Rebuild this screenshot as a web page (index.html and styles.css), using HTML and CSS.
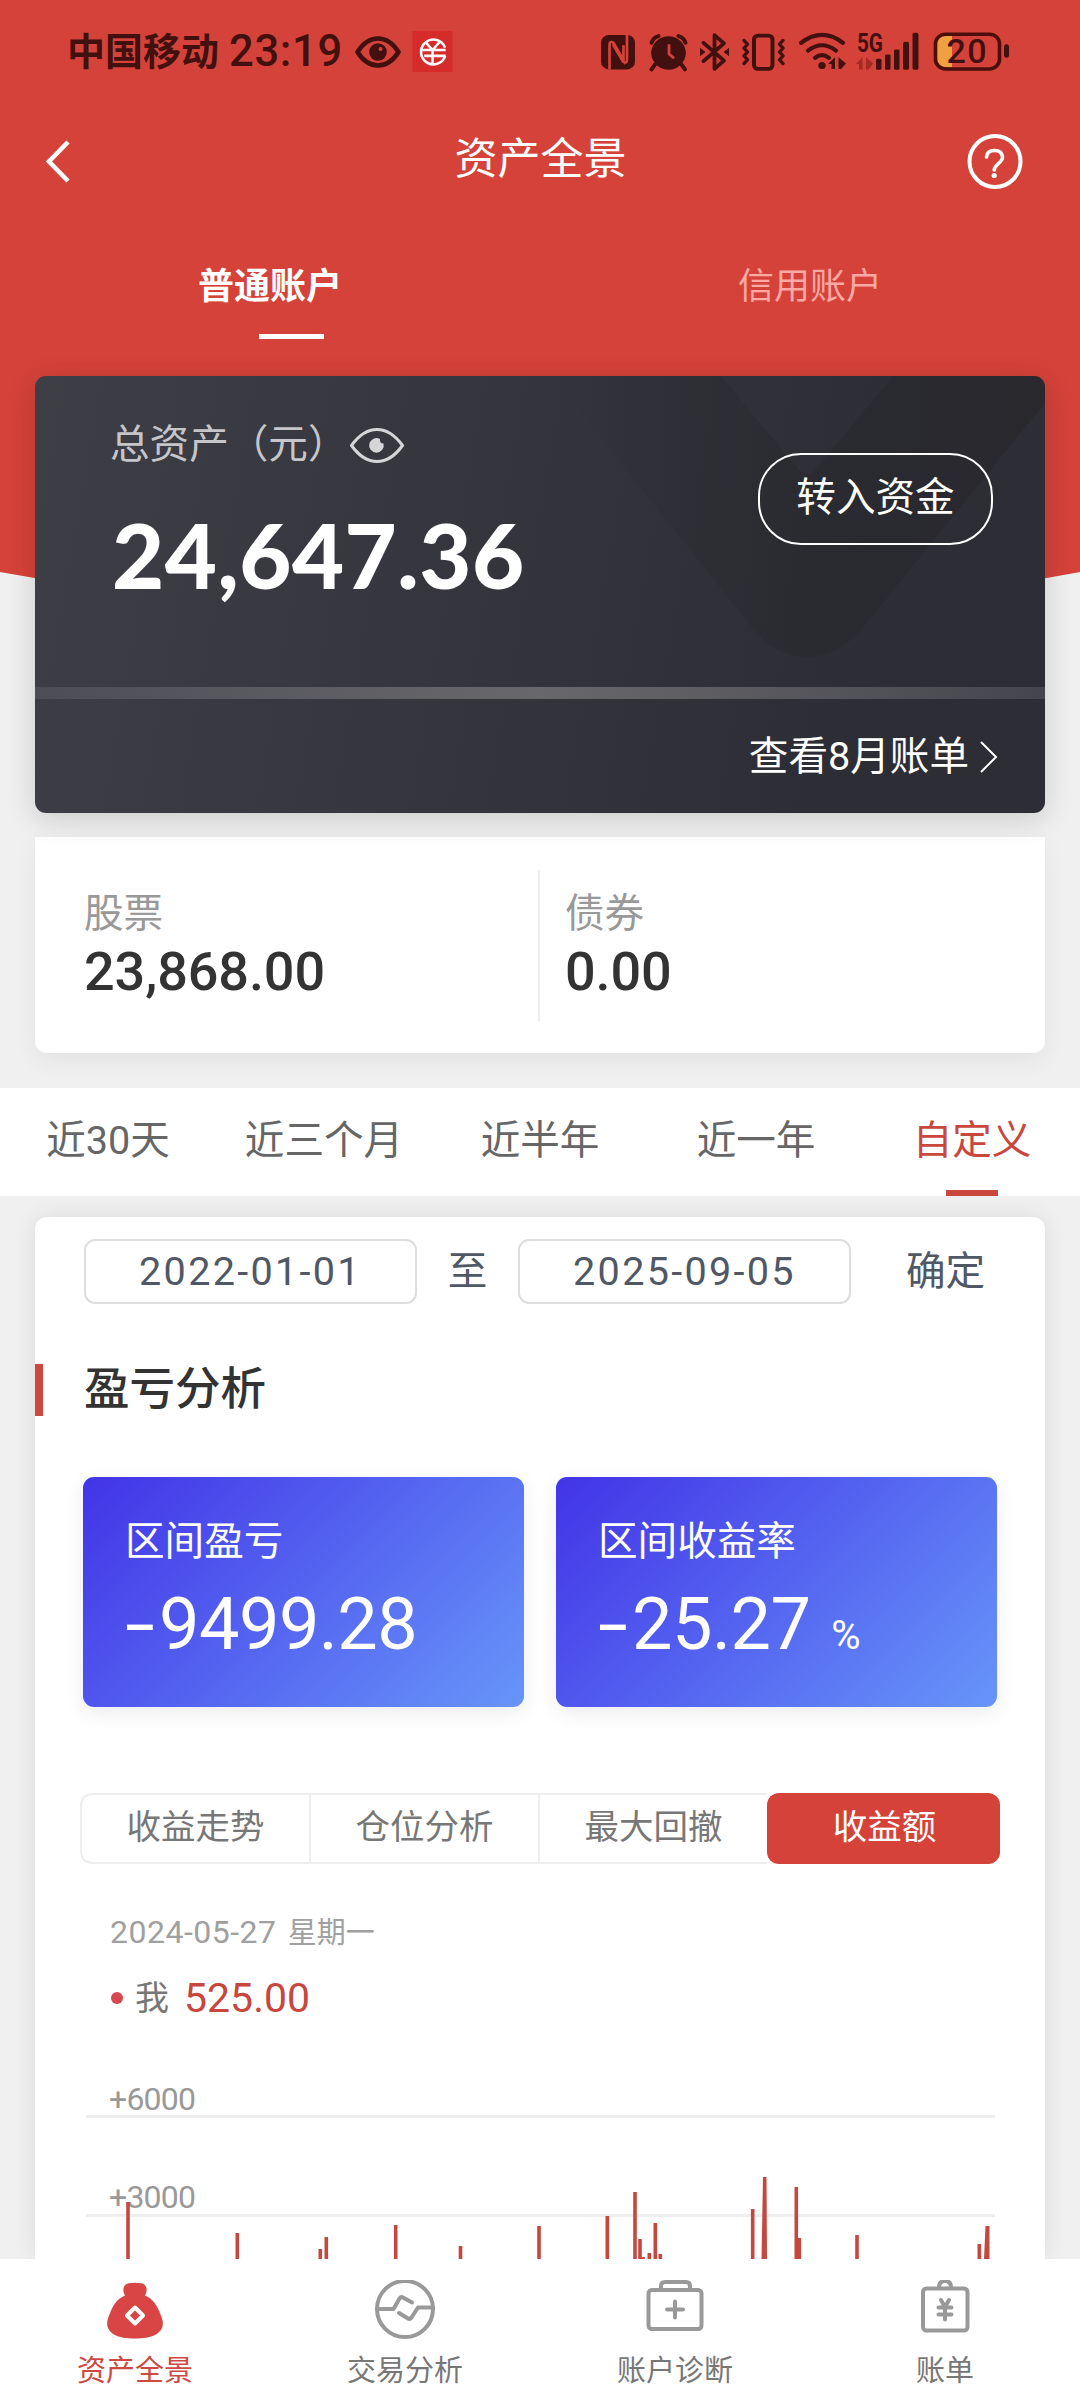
FILE: index.html
```html
<!DOCTYPE html>
<html lang="zh-CN">
  <head>
    <meta charset="UTF-8" />
    <meta name="viewport" content="width=device-width, initial-scale=1" />
    <title>资产全景</title>
    <link rel="stylesheet" href="styles.css">
  </head>
  <body>
    <svg class="hero-bg" width="1080" height="660" viewBox="0 0 1080 660">
      <path d="M0 0H1080V572Q540 672 0 572Z" fill="#d54239" />
    </svg>

    <div class="status">
      <span class="carrier">中国移动</span>
      <span class="time">23:19</span>
      <svg class="status-eye" width="46" height="32" viewBox="0 0 46 32">
        <path d="M2.500 16Q11 2.500 23 2.500T43.500 16Q35 29.500 23 29.500T2.500 16Z" fill="none" stroke="#42100e" stroke-width="4.600" stroke-linejoin="round" />
        <circle cx="23" cy="16" r="8.800" fill="#42100e" />
        <circle cx="25.500" cy="13" r="2" fill="#d54239" />
      </svg>
      <svg class="badge" width="41" height="41" viewBox="0 0 41 42">
        <rect width="41" height="42" fill="#d52b2b" />
        <g fill="none" stroke="#fff" stroke-width="2.600">
          <path d="M33.500 25.500A12.700 12.700 0 1 1 33.300 17" />
          <path d="M13 11l7.500 8.500L28 11M8 19.500H34M12 25.500H34M20.500 19v15" />
        </g>
      </svg>
      <svg class="status-icons" width="412" height="56" viewBox="600 24 412 58" preserveAspectRatio="none">
        <g fill="#42100e">
          <rect x="601" y="35.500" width="34" height="35.500" rx="8" />
          <path d="M609.500 71V46q0-5 4-2.500l10 18V46M627 35.500V61q0 4.500-4 2l-10-18" fill="none" stroke="#d54239" stroke-width="2.700" />
          <circle cx="668.500" cy="54" r="17.300" />
          <path d="M655 66l-3.500 5M681.500 66l3.500 5M651.500 43.500q1.500-5.500 7-7M685.500 43.500q-1.500-5.500-7-7" fill="none" stroke="#42100e" stroke-width="4" stroke-linecap="round" />
          <path d="M669 45v10l5 4.500" fill="none" stroke="#d54239" stroke-width="2.800" />
          <path d="M703.500 43.500L724 62l-9.500 8.500v-35L724 44l-20.500 18.500" fill="none" stroke="#42100e" stroke-width="3.800" stroke-linejoin="round" stroke-linecap="round" />
          <path d="M700 48.500l5.500 4.500-5.500 4.500zM729 48.500l-5.500 4.500 5.500 4.500z" />
          <rect x="754" y="36" width="18.500" height="34.500" rx="4" fill="none" stroke="#42100e" stroke-width="4" />
          <path d="M744 41l3.500 4-3.500 4 3.500 4-3.500 4 3.500 4-3.500 4M783 41l-3.500 4 3.500 4-3.500 4 3.500 4-3.500 4 3.500 4" fill="none" stroke="#42100e" stroke-width="3.400" stroke-linejoin="round" stroke-linecap="round" />
          <path d="M801 43.500q21-16.500 42 0M808 51.500q14-11 28 0M815 59q7-5.500 14 0" fill="none" stroke="#42100e" stroke-width="4.200" stroke-linecap="round" />
          <circle cx="822" cy="67" r="3.700" />
          <path d="M828 65.500l7-7v12h-3.500v-5zM838.500 58.500l7.500 6.500-5 5.500h-2.500z" />
          <text class="net" x="857" y="52.500" textLength="26" lengthAdjust="spacingAndGlyphs">5G</text>
          <path d="M856 65.500l6.500-7v12.500h-3.500v-5.500zM866 58.500l7 6.500-4.500 6h-2.500z" fill="#a32a25" />
          <rect x="876" y="60" width="5.500" height="11.500" rx="1.500" />
          <rect x="885" y="55.500" width="5.500" height="16" rx="1.500" />
          <rect x="894" y="50.500" width="5.500" height="21" rx="1.500" />
          <rect x="903" y="42.500" width="6" height="29" rx="2" />
          <rect x="912.500" y="33" width="6" height="38.500" rx="2" />
          <path d="M952 36.500V68.500H944q-7-1-7-7V43.500q0-6 7-7z" fill="#f0a040" />
          <rect x="935.500" y="34.500" width="64" height="36" rx="10" fill="none" stroke="#4c0e0c" stroke-width="3.600" />
          <rect x="1004" y="45" width="5" height="14" rx="2.500" />
          <text class="level" x="946.500" y="64.500" textLength="40">20</text>
        </g>
      </svg>
    </div>

    <header>
      <svg width="28" height="46" viewBox="0 0 28 46">
        <path d="M24 3L5 22.500l19 19.500" fill="none" stroke="#fff" stroke-width="4.600" />
      </svg>
      <h1>资产全景</h1>
      <svg width="56" height="58" viewBox="0 0 56 58">
        <circle cx="28" cy="28.500" r="25.500" fill="none" stroke="#fff" stroke-width="4" />
        <path d="M19.500 24Q20 17.500 27.500 17.500T35.500 24Q35.500 27 31.500 30.500T27.200 37" fill="none" stroke="#fff" stroke-width="3.600" stroke-linecap="round" />
        <circle cx="27.200" cy="42.500" r="2.600" fill="#fff" />
      </svg>
    </header>

    <nav class="accounts">
      <span class="account active">普通账户</span>
      <span class="account">信用账户</span>
    </nav>

    <section class="total">
      <svg class="mark" width="1010" height="311" viewBox="0 0 1010 311">
        <defs>
          <linearGradient id="fade" x1="0" x2="1">
            <stop offset="0" stop-color="#26262a" stop-opacity="0" />
            <stop offset=".5" stop-color="#26262c" stop-opacity=".45" />
            <stop offset="1" stop-color="#26262a" stop-opacity=".65" />
          </linearGradient>
        </defs>
        <path d="M516 0L719 254Q742 281 772 281T826 254L1010 27V0H858L779 95Q772 102 765 95L686 0Z" fill="url(#fade)" />
      </svg>
      <div class="total-top">
        <div>
          <div class="total-label">
            总资产（元）
            <svg width="56" height="38" viewBox="0 0 56 38">
              <path d="M2.500 19.500Q14 3.500 28 3.500T53.500 19.500Q42 35.500 28 35.500T2.500 19.500Z" fill="none" stroke="#d6d6d9" stroke-width="3" stroke-linejoin="round" />
              <path d="M31 13A7.300 7.300 0 1 0 34.500 17.500Q30.500 17.500 31 13Z" fill="#d6d6d9" />
            </svg>
          </div>
          <div class="total-value">24,647.36</div>
        </div>
        <button class="transfer">转入资金</button>
      </div>
      <div class="total-line"></div>
      <div class="bill">
        查看8月账单
        <svg width="20" height="34" viewBox="0 0 20 34">
          <path d="M2 2l15 15L2 32" fill="none" stroke="#fff" stroke-width="2" />
        </svg>
      </div>
    </section>

    <section class="holdings">
      <div class="holding">
        <div class="holding-name">股票</div>
        <div class="holding-value">23,868.00</div>
      </div>
      <div class="holding">
        <div class="holding-name">债券</div>
        <div class="holding-value">0.00</div>
      </div>
    </section>

    <nav class="periods">
      <span class="period">近30天</span>
      <span class="period">近三个月</span>
      <span class="period">近半年</span>
      <span class="period">近一年</span>
      <span class="period active">自定义</span>
    </nav>

    <main>
      <div class="range">
        <span class="date">2022-01-01</span>
        <span class="to">至</span>
        <span class="date">2025-09-05</span>
        <span class="confirm">确定</span>
      </div>

      <h2>盈亏分析</h2>

      <div class="stats">
        <div class="stat">
          <div class="stat-name">区间盈亏</div>
          <div class="stat-value"><span class="minus">-</span>9499.28</div>
        </div>
        <div class="stat">
          <div class="stat-name">区间收益率</div>
          <div class="stat-value"><span class="minus">-</span>25.27<small>%</small></div>
        </div>
      </div>

      <div class="segments">
        <span class="segment">收益走势</span>
        <span class="segment">仓位分析</span>
        <span class="segment">最大回撤</span>
        <span class="segment active">收益额</span>
      </div>

      <div class="day"><span>2024-05-27</span> 星期一</div>
      <div class="mine"><i></i>我<b>525.00</b></div>

      <svg class="chart" width="910" height="189" viewBox="85 2070 910 189">
        <path d="M86 2116.500H995M86 2215.500H995" stroke="#eee" stroke-width="3" />
        <g class="axis">
          <text x="109" y="2110" textLength="87">+6000</text>
          <text x="109" y="2207.500" textLength="87">+3000</text>
        </g>
        <path stroke="#c4483f" stroke-width="3.600" d="M128 2202V2259M237.300 2233V2259M320.300 2249V2259M326.300 2237V2259M395.700 2225V2259M460.500 2246V2259M539 2226V2259M607.300 2216V2259M635 2192V2259M640 2239V2259M643 2257V2259M649.300 2253V2259M655.300 2223V2259M660.300 2254V2259M752.700 2209V2259M796.300 2187V2259M799.300 2238V2259M857 2235V2259M979.300 2244V2259" />
        <path fill="#c4483f" d="M763 2177h3.500l.500 82h-5.500zM985.500 2226h4v33h-5.500z" />
      </svg>
    </main>

    <footer>
      <a class="tab active">
        <svg width="64" height="64" viewBox="0 0 64 64">
          <path d="M22 15.500C18.500 9 21 3.500 26 3.200Q32 2.200 38 3.200C43 3.500 45.500 9 42 15.500C50 19 54 25 57.500 34.500C65 50 54 58.500 32 58.500S-1 50 6.500 34.500C10 25 14 19 22 15.500Z" fill="#d94444" />
          <path d="M32 27.500l8 8-8 8-8-8z" fill="none" stroke="#fff" stroke-width="4" stroke-linejoin="round" />
        </svg>
        资产全景
      </a>
      <a class="tab">
        <svg width="64" height="64" viewBox="0 0 64 64">
          <g fill="none" stroke="#999" stroke-width="4" stroke-linecap="round" stroke-linejoin="round">
            <circle cx="32" cy="29" r="28" />
            <path d="M4 29H20.500L26.500 18.500Q28 16.500 30 17.500L39 22.500M60 27.500H45L38.500 37.500Q37 39.500 35 38.500L26 33" />
          </g>
        </svg>
        交易分析
      </a>
      <a class="tab">
        <svg width="64" height="64" viewBox="0 0 64 64">
          <g fill="none" stroke="#999" stroke-width="4" stroke-linecap="round">
            <rect x="5.500" y="10" width="53" height="39" rx="3.500" />
            <path d="M18 9V6q0-4 4-4H43q4 0 4 4V9M24 29.500H40M32 21.500V37.500" />
          </g>
        </svg>
        账户诊断
      </a>
      <a class="tab">
        <svg width="64" height="64" viewBox="0 0 64 64">
          <g fill="none" stroke="#999" stroke-width="4" stroke-linecap="round">
            <rect x="10" y="8.500" width="44.500" height="42" rx="3.500" />
            <path d="M26 7.500Q26 1 32 1T38 7.500M28 20L32 27l4-7M25.500 27.500H38.500M25.500 34.500H38.500M32 28V39.500" />
          </g>
        </svg>
        账单
      </a>
    </footer>
  </body>
</html>
```

FILE: styles.css
```css
* {
  box-sizing: border-box;
}

body {
  background-color: #f0f0f0;
  color: #333;
  display: flex;
  flex-direction: column;
  font-family: Roboto, "Noto Sans CJK SC", sans-serif;
  font-size: 39.6px;
  height: 2400px;
  line-height: 48px;
  margin: 0;
  overflow: hidden;
  position: relative;
  width: 1080px;
}

svg {
  display: block;
  flex-shrink: 0;
}

.hero-bg {
  left: 0;
  position: absolute;
  top: 0;
  z-index: -1;
}

.status {
  align-items: center;
  color: #42100e;
  display: flex;
  height: 104px;
  padding: 0 68px 1px 67px;
}

.carrier {
  font-size: 38px;
  font-weight: 700;
  width: 162px;
}

.time {
  font-size: 43.5px;
  font-weight: 500;
  letter-spacing: 0.7px;
  width: 126px;
}

.status-eye {
  margin-right: 11px;
}

.status-icons {
  margin-left: 147px;
}

.net {
  font-size: 26px;
  font-weight: 700;
}

.level {
  font-size: 34px;
  font-weight: 500;
}

header {
  align-items: center;
  color: #fff;
  display: flex;
  height: 115px;
  justify-content: space-between;
  padding: 0 57px 0 44px;
}

h1 {
  font-size: 43px;
  font-weight: 400;
  margin: 0 0 5px 42px;
}

.accounts {
  color: #fba9a2;
  display: flex;
  font-size: 36px;
  height: 157px;
}

.account {
  padding-top: 44px;
  text-align: center;
  width: 540px;
}

.account.active {
  color: #fff;
  font-weight: 700;
}

.account.active::after {
  background-color: #fff;
  content: "";
  display: block;
  height: 5px;
  margin: 23px 0 0 259px;
  width: 65px;
}

.total {
  background: linear-gradient(100deg, #3e3e47, #2d2d35 80%);
  border-radius: 11px;
  box-shadow: 0 6px 30px rgba(0, 0, 0, 0.16);
  color: #fff;
  height: 437px;
  margin: 0 35px 24px;
  position: relative;
}

.mark {
  border-radius: 11px;
  left: 0;
  position: absolute;
  top: 0;
}

.total-top {
  display: flex;
  height: 311px;
  justify-content: space-between;
  padding: 45px 52px 0 75px;
  position: relative;
}

.total-label {
  align-items: center;
  color: #c6c6ca;
  display: flex;
  gap: 2px;
}

.total-value {
  font-family: Lato, sans-serif;
  font-kerning: none;
  font-size: 90px;
  font-weight: 900;
  letter-spacing: 0.5px;
  line-height: 100px;
  margin: 35px 0 0 2px;
}

.transfer {
  background: none;
  border: 2px solid #fff;
  border-radius: 43px;
  color: #fff;
  font: inherit;
  height: 92px;
  margin-top: 32px;
  padding: 0 0 2px;
  width: 235px;
}

.total-line {
  background: linear-gradient(90deg, #4d4d56, #68686c 50%, #45454d);
  height: 12px;
}

.bill {
  align-items: center;
  display: flex;
  gap: 10px;
  justify-content: flex-end;
  padding: 34px 46px 0 0;
}

.holdings {
  background-color: #fff;
  border-radius: 0 0 12px 12px;
  box-shadow: 0 8px 25px rgba(0, 0, 0, 0.06);
  display: flex;
  height: 216px;
  margin: 0 35px 35px;
  padding: 33px 0 32px;
}

.holding {
  padding: 20px 0 0 49px;
  width: 505px;
}

.holding + .holding {
  border-left: 2px solid #eee;
  margin-left: -2px;
  padding-left: 25px;
}

.holding-name {
  color: #999;
}

.holding-value {
  font-size: 54px;
  font-weight: 500;
  letter-spacing: -0.1px;
  margin-top: 10px;
}

.periods {
  background-color: #fff;
  color: #666;
  display: flex;
  height: 108px;
  margin-bottom: 21px;
}

.period {
  padding-top: 29px;
  text-align: center;
  width: 216px;
}

.period.active {
  color: #c9473d;
}

.period.active::after {
  background-color: #c9473d;
  content: "";
  display: block;
  height: 6px;
  margin: 25px auto 0;
  width: 52px;
}

main {
  background-color: #fff;
  border-radius: 12px 12px 0 0;
  box-shadow: 0 0 25px rgba(0, 0, 0, 0.09);
  flex-grow: 1;
  margin: 0 35px;
  padding: 22px 45px 0 49px;
}

.range {
  align-items: center;
  color: #505866;
  display: flex;
}

.date {
  border: 2px solid #ddd;
  border-radius: 11px;
  height: 65px;
  letter-spacing: 2.3px;
  line-height: 61px;
  text-align: center;
  width: 333px;
}

.to {
  text-align: center;
  width: 101px;
}

.confirm {
  margin-left: 55px;
}

h2 {
  border-left: 8px solid #cf473e;
  font-size: 45.5px;
  font-weight: 500;
  line-height: 52px;
  margin: 60px 0 0 -49px;
  padding: 0 0 0 41px;
}

.stats {
  display: flex;
  gap: 32px;
  margin: 61px 0 0 -1px;
}

.stat {
  background: linear-gradient(135deg, #4234e7, #6795f9);
  border-radius: 11px;
  box-shadow: 0 6px 20px rgba(0, 0, 0, 0.08);
  color: #fff;
  height: 230px;
  padding: 41px 42px 0;
  width: 441px;
}

.stat-value {
  align-items: baseline;
  display: flex;
  font-size: 72px;
  letter-spacing: -0.5px;
  line-height: 72px;
  margin-top: 23px;
}

/* the hyphen glyph is too short for a minus sign */
.minus {
  transform: scaleX(1.5);
  transform-origin: left;
  width: 34px;
}

.stat-value small {
  font-size: 40px;
  margin-left: 21px;
}

.segments {
  color: #777;
  display: flex;
  font-size: 34.5px;
  height: 71px;
  line-height: 64px;
  margin: 86px 0 0 -4px;
  text-align: center;
  width: 920px;
}

.segment {
  border: 2px solid #eee;
  border-right: none;
  width: 229px;
}

.segment:first-child {
  border-radius: 12px 0 0 12px;
}

.segment.active {
  background-color: #d54239;
  border-color: #d54239;
  border-radius: 12px;
  color: #fff;
  flex-grow: 1;
}

.day {
  color: #a0a0a0;
  font-size: 29px;
  margin: 44px 0 0 26px;
}

.day span {
  font-size: 32px;
  letter-spacing: 0.5px;
  margin-right: 4px;
}

.mine {
  align-items: center;
  color: #777;
  display: flex;
  font-size: 34px;
  margin: 17px 0 0 27px;
}

.mine i {
  background-color: #d84650;
  border-radius: 50%;
  height: 12px;
  margin-right: 12px;
  width: 12px;
}

.mine b {
  color: #c7473e;
  font-size: 41px;
  font-weight: 400;
  margin-left: 15px;
}

.chart {
  margin: 48px 0 0 1px;
}

.axis {
  fill: #999;
  font-size: 32px;
}

footer {
  background-color: #fff;
  display: flex;
  height: 141px;
  position: relative;
}

.tab {
  align-items: center;
  color: #777;
  display: flex;
  flex-direction: column;
  font-size: 29px;
  line-height: 40px;
  padding-top: 21px;
  width: 270px;
}

.tab svg {
  margin-bottom: 7px;
}

.tab.active {
  color: #cc4a43;
}
```
